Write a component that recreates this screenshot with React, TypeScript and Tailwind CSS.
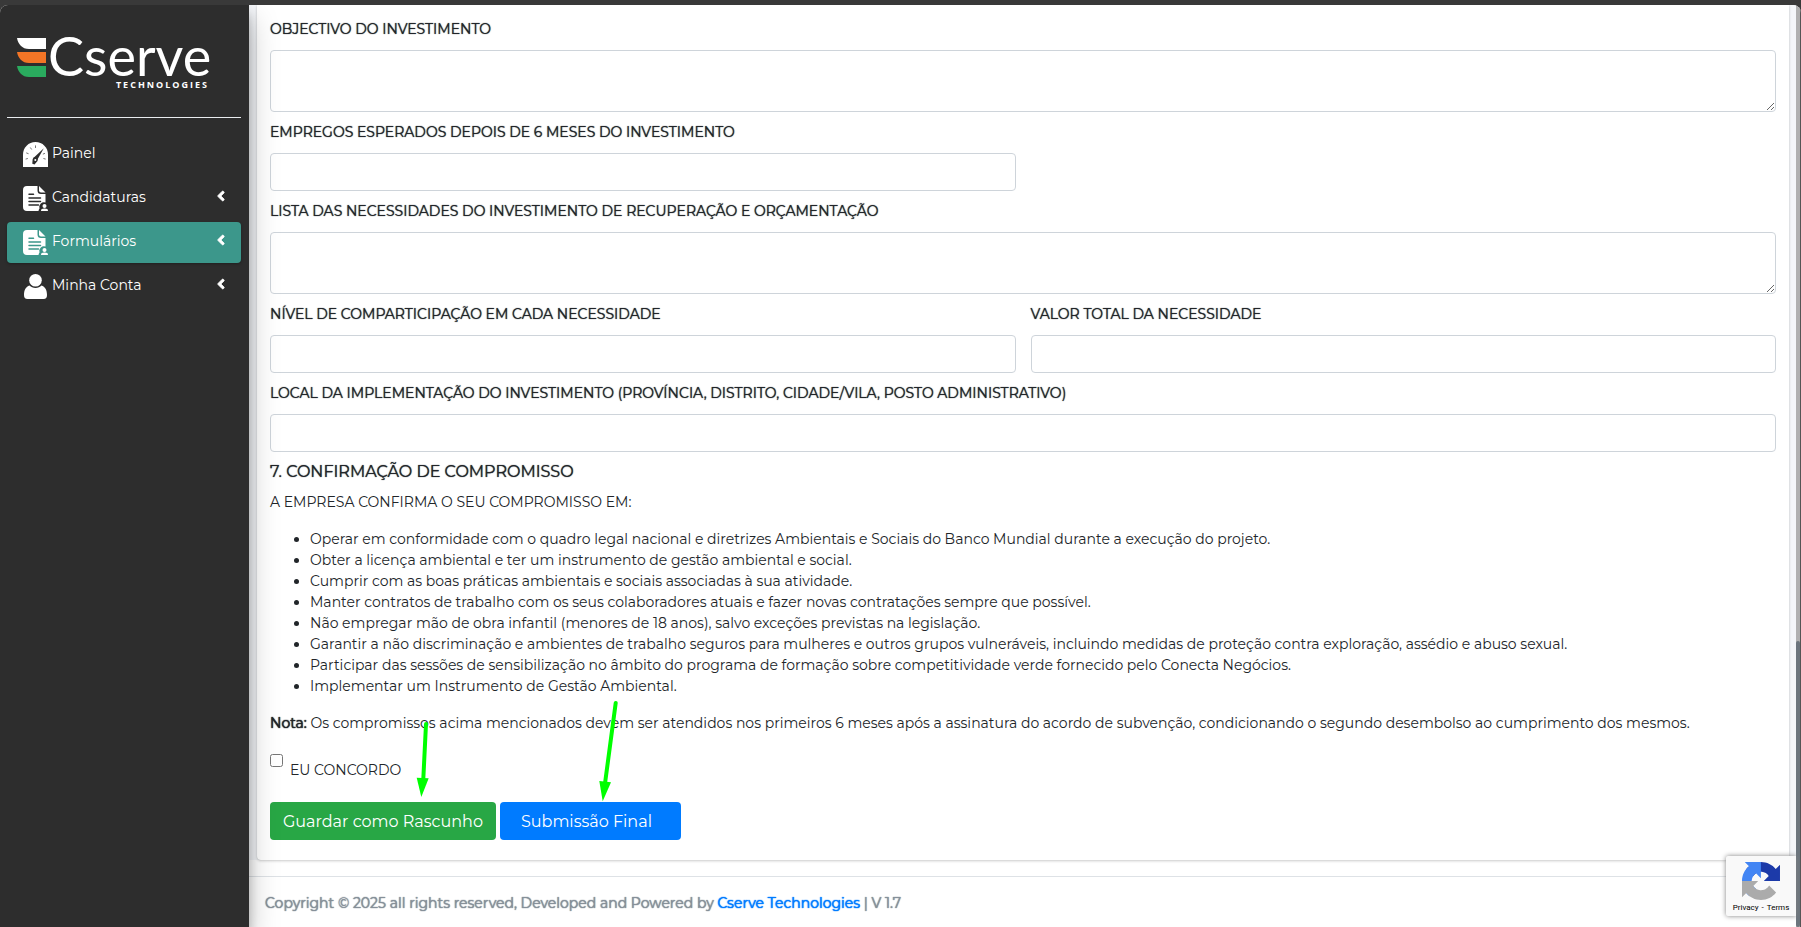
import React, { useState } from 'react';
import { FaAngleLeft } from 'react-icons/fa';

interface MenuItem {
  label: string;
  icon: React.ReactNode;
  active?: boolean;
  expandable?: boolean;
}

const GaugeIcon = () => (
  <svg viewBox="0 0 25 25" className="h-[25px] w-[25px]" aria-hidden="true">
    <path d="M0 25V12.5C0 5.5 5.500 0 12.500 0S25 5.500 25 12.500V25z" fill="#fff" />
    <g stroke="#777" strokeWidth="1" strokeLinecap="round">
      <path d="M3 17l1.500-.4M3.600 11l1.600.6M7.500 5.800l1 1.400M12.500 3.800v1.800M21.600 11.500l-1.400.5M22.300 17l-1.500-.4" />
    </g>
    <path d="M20.800 6.300L11 15.500l3.200 2.600z" fill="#2d2d2d" />
    <path d="M12.300 14.800a3 3 0 0 1 2.200 4.300l-3 3.400-2.200-.8.300-4.300a3 3 0 0 1 2.700-2.600z" fill="#2d2d2d" />
    <circle cx="12.300" cy="18" r="1" fill="#fff" />
  </svg>
);

const DocumentIcon = () => (
  <svg viewBox="0 0 25 25" className="h-[25px] w-[25px]" aria-hidden="true">
    <path
      d="M4 0h10.500v4.500A3.500 3.500 0 0 0 18 8h4.500v8.600a4.700 4.700 0 0 0-6 6A4.500 4.500 0 0 0 15.500 25H4a4 4 0 0 1-4-4V4a4 4 0 0 1 4-4z"
      fill="#fff"
    />
    <path d="M16 0l6.500 6.500H18a2 2 0 0 1-2-2z" fill="#fff" />
    <g fill="none" stroke="currentColor" strokeWidth="1.500" strokeLinecap="round">
      <path d="M6 8.300h4.500M6 12h11.500M6 15.500h11.500M6 19h9.500" />
    </g>
    <circle cx="21.500" cy="20" r="2" fill="#fff" />
    <path d="M18 25c0-1.800 1-2.500 3.500-2.500s3.500.7 3.500 2.500z" fill="#fff" />
  </svg>
);

const UserIcon = () => (
  <svg viewBox="0 0 25 25" className="h-[25px] w-[25px]" aria-hidden="true">
    <circle cx="12.500" cy="6.300" r="6.300" fill="#fff" />
    <path d="M6.500 11.500c1.500 1.600 3.500 2.500 6 2.500s4.500-.9 6-2.500c3.500 1 5.500 4.500 5.500 9.500 0 2.800-1 4-3.500 4h-16C2 25 1 23.800 1 21c0-5 2-8.500 5.500-9.500z" fill="#fff" />
  </svg>
);

const RecaptchaIcon = () => (
  <svg viewBox="0 0 64 64" className="h-[38px] w-[38px]" aria-hidden="true">
    <path
      d="M64 31.955l-.033-1.370V4.687l-7.160 7.160C50.948 4.674 42.033.093 32.050.093c-10.400 0-19.622 4.960-25.458 12.640l11.736 11.860a15.550 15.550 0 0 1 4.754-5.334c2.050-1.600 4.952-2.906 8.968-2.906.485 0 .860.057 1.135.163 4.976.393 9.288 3.140 11.828 7.124l-8.307 8.307L64 31.953"
      fill="#1c3aa9"
    />
    <path
      d="M31.862.094l-1.370.033H4.594l7.160 7.160C4.580 13.147 0 22.060 0 32.046c0 10.400 4.960 19.622 12.640 25.458L24.500 45.768a15.550 15.550 0 0 1-5.334-4.754c-1.600-2.050-2.906-4.952-2.906-8.968 0-.485.057-.860.163-1.135.393-4.976 3.140-9.288 7.124-11.828l8.307 8.307L31.860.095"
      fill="#4285f4"
    />
    <path
      d="M.001 32.045l.033 1.370v25.898l7.160-7.160c5.860 7.173 14.774 11.754 24.760 11.754 10.400 0 19.622-4.960 25.458-12.640l-11.736-11.860a15.550 15.550 0 0 1-4.754 5.334c-2.050 1.600-4.952 2.906-8.968 2.906-.485 0-.860-.057-1.135-.163-4.976-.393-9.288-3.140-11.828-7.124l8.307-8.307-31.297-.007"
      fill="#ababab"
    />
  </svg>
);

const Logo = () => (
  <svg viewBox="0 0 206 70" className="h-[70px] w-[206px]" role="img" aria-label="Cserve Technologies">
    <path d="M0 13h29v11H12C5 24 1 19 0 13z" fill="#fff" />
    <path d="M0 27h29v11H12C5 38 1 33 0 27z" fill="#f37526" />
    <path d="M0 41h29v11H12C5 52 1 47 0 41z" fill="#2aab5e" />
    <text x="31" y="51" fill="#fff" className="font-['Lato',sans-serif] text-[54px]">Cserve</text>
    <text x="192" y="63" textAnchor="end" fill="#fff" className="font-['Open_Sans',sans-serif] text-[9px] font-bold tracking-[2px]">
      TECHNOLOGIES
    </text>
  </svg>
);

const menu: MenuItem[] = [
  { label: 'Painel', icon: <GaugeIcon /> },
  { label: 'Candidaturas', icon: <DocumentIcon />, expandable: true },
  { label: 'Formulários', icon: <DocumentIcon />, expandable: true, active: true },
  { label: 'Minha Conta', icon: <UserIcon />, expandable: true },
];

const commitments = [
  'Operar em conformidade com o quadro legal nacional e diretrizes Ambientais e Sociais do Banco Mundial durante a execução do projeto.',
  'Obter a licença ambiental e ter um instrumento de gestão ambiental e social.',
  'Cumprir com as boas práticas ambientais e sociais associadas à sua atividade.',
  'Manter contratos de trabalho com os seus colaboradores atuais e fazer novas contratações sempre que possível.',
  'Não empregar mão de obra infantil (menores de 18 anos), salvo exceções previstas na legislação.',
  'Garantir a não discriminação e ambientes de trabalho seguros para mulheres e outros grupos vulneráveis, incluindo medidas de proteção contra exploração, assédio e abuso sexual.',
  'Participar das sessões de sensibilização no âmbito do programa de formação sobre competitividade verde fornecido pelo Conecta Negócios.',
  'Implementar um Instrumento de Gestão Ambiental.',
];

interface FieldProps {
  id: string;
  label: string;
  multiline?: boolean;
  className?: string;
}

const Field: React.FC<FieldProps> = ({ id, label, multiline, className }) => (
  <div className={className}>
    <label htmlFor={id} className="mb-2.5 block [text-shadow:0_0_1px_currentColor]">
      {label}
    </label>
    {multiline ? (
      <textarea id={id} className="block h-[62px] w-full rounded border border-[#ced4da] bg-white px-3 py-1.5" />
    ) : (
      <input id={id} type="text" className="block h-[38px] w-full rounded border border-[#ced4da] bg-white px-3 py-1.5" />
    )}
  </div>
);

const Sidebar = () => (
  <aside className="relative z-10 w-[249px] shrink-0 bg-[#2d2d2d] pr-2 pl-[7px] text-white shadow-[0_14px_28px_rgba(0,0,0,0.25),0_10px_10px_rgba(0,0,0,0.22)]">
    <a href="#" className="flex h-[113px] border-b border-[#e9ecef] pt-5 pl-2.5">
      <Logo />
    </a>
    <nav className="mt-4 flex flex-col gap-[3px]">
      {menu.map((item) => (
        <a
          key={item.label}
          href="#"
          className={`flex h-[41px] items-center rounded px-4 ${
            item.active ? 'bg-[#3c978b] text-[#3c978b] shadow-[0_1px_3px_rgba(0,0,0,0.3)]' : 'text-[#2d2d2d]'
          }`}
        >
          {item.icon}
          <span className="mb-[3px] ml-1 text-white">{item.label}</span>
          {item.expandable && <FaAngleLeft className="mb-[5px] ml-auto h-4 w-2 stroke-white stroke-[24px] text-white" />}
        </a>
      ))}
    </nav>
  </aside>
);

const InvestmentForm = () => {
  const [agreed, setAgreed] = useState(false);

  return (
    <form
      className="rounded-b bg-white px-[13px] pt-3.5 pb-5 shadow-[0_0_1px_rgba(0,0,0,0.125),0_1px_3px_rgba(0,0,0,0.2)]"
      onSubmit={(e) => e.preventDefault()}
    >
      <div className="grid grid-cols-2 gap-x-[15px] gap-y-2.5">
        <Field id="objectivo" label="OBJECTIVO DO INVESTIMENTO" multiline className="col-span-2" />
        <Field id="empregos" label="EMPREGOS ESPERADOS DEPOIS DE 6 MESES DO INVESTIMENTO" />
        <Field
          id="necessidades"
          label="LISTA DAS NECESSIDADES DO INVESTIMENTO DE RECUPERAÇÃO E ORÇAMENTAÇÃO"
          multiline
          className="col-span-2"
        />
        <Field id="comparticipacao" label="NÍVEL DE COMPARTICIPAÇÃO EM CADA NECESSIDADE" />
        <Field id="valor" label="VALOR TOTAL DA NECESSIDADE" />
        <Field
          id="local"
          label="LOCAL DA IMPLEMENTAÇÃO DO INVESTIMENTO (PROVÍNCIA, DISTRITO, CIDADE/VILA, POSTO ADMINISTRATIVO)"
          className="col-span-2"
        />
      </div>

      <h2 className="mt-[9px] text-[16px] leading-[21px] [text-shadow:0_0_1px_currentColor]">7. CONFIRMAÇÃO DE COMPROMISSO</h2>
      <p className="mt-2.5">A EMPRESA CONFIRMA O SEU COMPROMISSO EM:</p>
      <ul className="mt-4 list-disc pl-10">
        {commitments.map((text) => (
          <li key={text}>{text}</li>
        ))}
      </ul>
      <p className="mt-4">
        <b className="font-normal [text-shadow:0_0_1px_currentColor,0_0_1px_currentColor]">Nota:</b> Os compromissos acima
        mencionados devem ser atendidos nos primeiros 6 meses após a assinatura do acordo de subvenção, condicionando o segundo
        desembolso ao cumprimento dos mesmos.
      </p>

      <div className="mt-5 flex items-start gap-[7px]">
        <input
          id="concordo"
          type="checkbox"
          checked={agreed}
          onChange={(e) => setAgreed(e.target.checked)}
          className="h-[13px] w-[13px]"
        />
        <label htmlFor="concordo" className="mt-1.5">
          EU CONCORDO
        </label>
      </div>

      <div className="relative mt-[21px] flex gap-1 text-[16px] text-white">
        <button type="button" className="h-[38px] rounded bg-[#28a745] px-[13px]">
          Guardar como Rascunho
        </button>
        <button type="submit" className="h-[38px] rounded bg-[#007bff] pr-[29px] pl-[21px]">
          Submissão Final
        </button>

        {/* Arrows pointing at the two actions */}
        <svg viewBox="0 0 210 104" className="pointer-events-none absolute bottom-full left-[145px] h-[104px] w-[210px]" aria-hidden="true">
          <g stroke="#0f0" strokeWidth="4" strokeLinecap="round">
            <path d="M11 26L8.300 81" />
            <path d="M200.700 5L190.200 84" />
          </g>
          <path d="M1.700 79.700l12 .6L6.300 99z" fill="#0f0" />
          <path d="M184.300 83l11.700 1.300L187.700 103.300z" fill="#0f0" />
        </svg>
      </div>
    </form>
  );
};

const App: React.FC = () => (
  <div className="flex min-h-screen bg-[#393939] pt-[5px] font-['Montserrat','Inter',sans-serif] text-[14px] leading-[21px] text-[#212529]">
    <div className="relative flex grow overflow-hidden rounded-t-lg bg-white">
      <Sidebar />

      <div className="flex min-w-0 grow flex-col">
        <main className="bg-[#f4f6f9] pr-[7px] pl-2">
          <InvestmentForm />
        </main>
        <footer className="mt-4 grow border-t border-[#dee2e6] px-4 pt-4 text-[#869099] [text-shadow:0_0_1px_currentColor,0_0_1px_currentColor]">
          Copyright © 2025 all rights reserved, Developed and Powered by{' '}
          <a href="#" className="text-[#007bff]">
            Cserve Technologies
          </a>{' '}
          | V 1.7
        </footer>
      </div>

      {/* Scrollbar */}
      <div className="flex w-[5px] shrink-0 flex-col justify-end border-r border-[#555] bg-[#b0b0b0]">
        <div className="h-[31%] rounded bg-[#6c757d]"></div>
      </div>

      <div className="absolute right-[5px] bottom-[11px] z-20 flex h-[60px] w-[70px] flex-col items-center rounded-l-xs bg-[#f9f9f9] pt-1.5 shadow-[0_0_5px_#808080]">
        <RecaptchaIcon />
        <div className="flex gap-[3px] font-['Roboto',sans-serif] text-[8px] leading-4 text-black">
          <a href="#">Privacy</a>
          <span>-</span>
          <a href="#">Terms</a>
        </div>
      </div>
    </div>
  </div>
);

export default App;
